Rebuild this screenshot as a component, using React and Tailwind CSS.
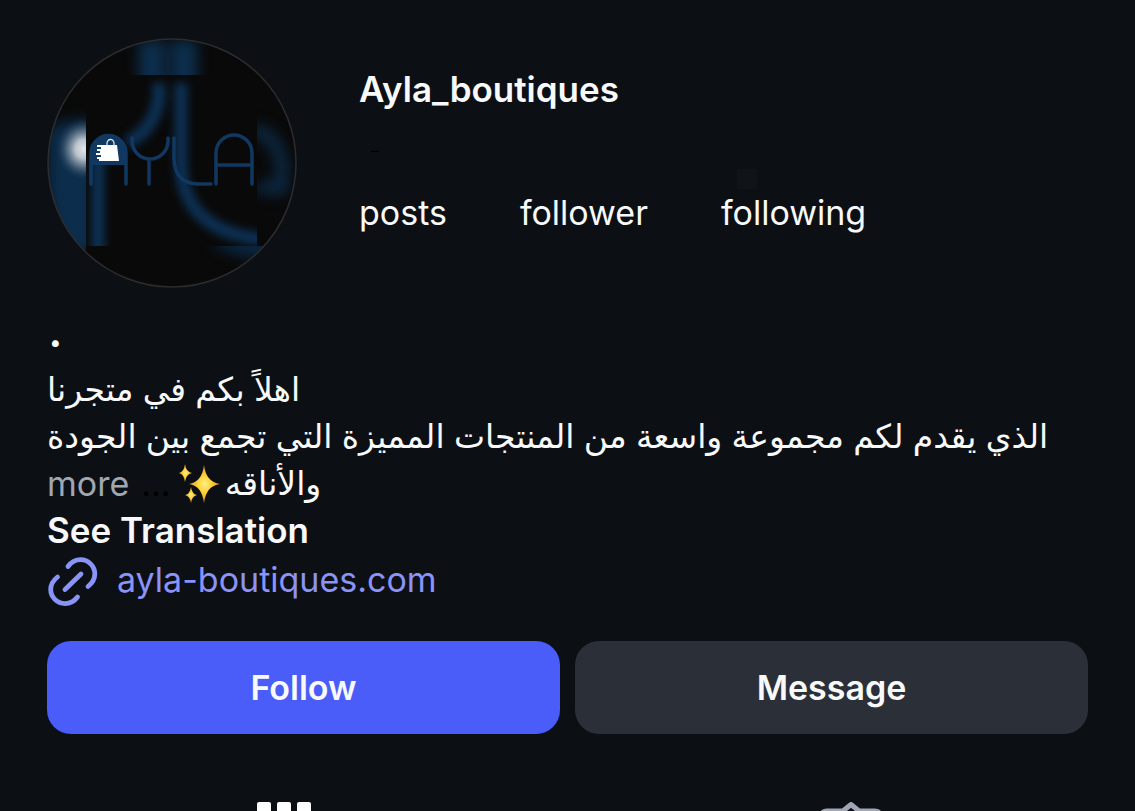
import React from "react";

const stats = [
  { label: "posts", masked: false },
  { label: "follower", masked: false },
  { label: "following", masked: true },
];

const Avatar = () => (
  <svg viewBox="0 0 250 250" className="w-[250px] h-[250px] shrink-0" role="img" aria-label="Ayla logo">
    <defs>
      <clipPath id="circle"><circle cx="125" cy="125" r="124" /></clipPath>
      <clipPath id="inner"><rect x="39" y="37" width="171" height="171" /></clipPath>
      <clipPath id="left"><rect x="0" y="37" width="39" height="190" /></clipPath>
      <clipPath id="top"><rect x="39" y="0" width="171" height="37" /></clipPath>
      <clipPath id="right"><rect x="210" y="37" width="40" height="171" /></clipPath>
      <clipPath id="bottom"><rect x="39" y="208" width="180" height="42" /></clipPath>
      <filter id="soft" x="-50%" y="-50%" width="200%" height="200%" colorInterpolationFilters="sRGB">
        <feGaussianBlur stdDeviation="4" />
      </filter>
      <filter id="softer" x="-100%" y="-100%" width="300%" height="300%" colorInterpolationFilters="sRGB">
        <feGaussianBlur stdDeviation="7" />
      </filter>
      <radialGradient id="glow">
        <stop offset="0" stopColor="#e2e6ea" />
        <stop offset="0.3" stopColor="#b9c2cb" />
        <stop offset="0.6" stopColor="#5d7489" stopOpacity="0.8" />
        <stop offset="1" stopColor="#0c2a47" stopOpacity="0" />
      </radialGradient>
    </defs>
    <g clipPath="url(#circle)">
      <rect width="250" height="250" fill="#090909" />
      <g clipPath="url(#left)">
        <path d="M0 92 Q15 80 50 82 V215 H20 Q0 190 0 150Z" fill="#0c2d4b" filter="url(#softer)" />
        <ellipse cx="37" cy="111" rx="29" ry="32" fill="url(#glow)" />
      </g>
      <g clipPath="url(#top)" fill="#0d2f4e" filter="url(#softer)">
        <rect x="92" y="2" width="26" height="48" />
        <rect x="124" y="2" width="26" height="48" />
      </g>
      <g clipPath="url(#right)">
        <path d="M205 92 Q230 95 235 128 V150 H210" fill="none" stroke="#0c2c49" strokeWidth="12" filter="url(#softer)" />
      </g>
      <g clipPath="url(#bottom)">
        <path d="M165 204 Q190 222 225 218 V200 H165Z" fill="#0b2947" filter="url(#softer)" />
      </g>
      <g clipPath="url(#inner)">
        <g fill="none" stroke="#0d3155" strokeWidth="13" filter="url(#soft)">
          <path d="M112 45 V60 Q107 92 80 105" />
          <path d="M134 45 V125 Q135 197 225 202" />
          <path d="M51 120 V225" />
        </g>
      </g>
      <path d="M44 127 V116 A17.5 17.5 0 0 1 79 116 V127Z" fill="#103860" />
      <g fill="none" stroke="#103860" strokeWidth="3.5" strokeLinecap="round">
        <path d="M44 146 V115 A17.5 17.5 0 0 1 79 115 V146" />
        <path d="M85 100 V103 A18 18 0 0 0 121 103 V100 M102 121 V146" />
        <path d="M127 100 V121 Q128 145 150 146 H164" />
        <path d="M169 146 V115 A17.5 17.5 0 0 1 205 115 V146 M169 127 H205" />
      </g>
      <path d="M54 107 H70 L72 123 H52 V121 H50 V119 H54 V117 H49 V115 H53 V113 H50 V111 H54 V109 H50 V107Z" fill="#fff" />
      <path d="M60 108 V106 A3.5 4 0 0 1 67 105 V108" fill="none" stroke="#dfe7ee" strokeWidth="1.3" />
    </g>
    <circle cx="125" cy="125" r="124" fill="none" stroke="#2c2c2d" strokeWidth="1.5" />
  </svg>
);

const Sparkles = () => (
  <svg viewBox="0 0 42 40" className="w-[42px] h-10 ml-2 mr-1" aria-hidden="true">
    <defs>
      <radialGradient id="gold">
        <stop offset="0" stopColor="#fff08a" />
        <stop offset="0.4" stopColor="#fdd43c" />
        <stop offset="1" stopColor="#e39a1e" />
      </radialGradient>
    </defs>
    <g fill="url(#gold)">
      <path d="M25 1 Q27 18 41 20 Q27 22 25 39 Q23 22 10 20 Q23 18 25 1Z" />
      <path d="M6 0 Q7 8 13 9 Q7 10 6 18 Q5 10 0 9 Q5 8 6 0Z" />
      <path d="M12 23 Q13 30 18 31 Q13 32 12 39 Q11 32 6 31 Q11 30 12 23Z" />
    </g>
  </svg>
);

const LinkIcon = () => (
  <svg viewBox="0 0 50 50" className="w-[50px] h-[50px] overflow-visible" fill="none" stroke="#8a93f8" strokeWidth="4.8" strokeLinecap="round" aria-hidden="true">
    <path d="M21 10.500 Q26 3.700 33.500 3.700 A14.300 14.300 0 0 1 47.800 18 Q47.800 25 41 30.500" />
    <path d="M30.500 41 Q25.500 47.600 18 47.600 A14.300 14.300 0 0 1 3.700 33.300 Q3.700 26.500 10.500 21" />
    <path d="M18 33.500 L34 18" />
  </svg>
);

const App = () => {
  return (
    <div className="h-screen overflow-hidden bg-[#0c1014] text-[#f8f9fa] text-[34px] leading-[47px] font-['Inter','Noto_Sans','DejaVu_Sans',sans-serif]">
      <main className="px-[47px] pt-[38px]">
        <header className="flex gap-[62px]">
          <Avatar />
          <div className="pt-7">
            <h1 className="font-semibold text-[35px]">Ayla_boutiques</h1>
            <div className="mt-[38px] ml-3 h-px w-2 bg-black" />
            <ul className="mt-[17px] flex gap-[73px]">
              {stats.map((stat) => (
                <li key={stat.label}>
                  <div className={stat.masked ? "ml-4 h-5 w-5 bg-[#101317]" : "h-5 w-5"} />
                  {stat.label}
                </li>
              ))}
            </ul>
          </div>
        </header>

        <section className="mt-[31px]">
          <p className="mb-4 pl-[2px] leading-[31px] font-black">.</p>
          <p lang="ar" dir="rtl" className="text-left text-[33px]">اهلاً بكم في متجرنا</p>
          <p lang="ar" dir="rtl" className="text-left text-[33px] whitespace-nowrap">
            الذي يقدم لكم مجموعة واسعة من المنتجات المميزة التي تجمع بين الجودة
          </p>
          <div className="flex items-center">
            <button type="button" className="text-[#a0a7b2]">more</button>
            <span className="ml-3 text-black">...</span>
            <Sparkles />
            <span lang="ar" dir="rtl" className="text-[33px]">والأناقه</span>
          </div>
          <button type="button" className="block font-semibold text-[35px]">See Translation</button>
          <a href="https://ayla-boutiques.com" className="mt-[2px] flex items-start gap-5 text-[#8a93f8]">
            <LinkIcon />
            ayla-boutiques.com
          </a>
        </section>

        <div className="mt-[35px] grid grid-cols-2 gap-[15px]">
          <button type="button" className="h-[93px] rounded-3xl bg-[#4a5df9] font-semibold">Follow</button>
          <button type="button" className="h-[93px] rounded-3xl bg-[#2b2f37] font-semibold">Message</button>
        </div>
      </main>

      <nav className="mt-[68px] grid grid-cols-2 items-start justify-items-center">
        <button type="button" aria-label="Posts">
          <svg viewBox="0 0 54 54" className="w-[54px] h-[54px]" fill="#fff">
            {[0, 20, 40].map((y) =>
              [0, 20, 40].map((x) => <rect key={`${x}-${y}`} x={x} y={y} width="14" height="14" rx="2" />)
            )}
          </svg>
        </button>
        <button type="button" aria-label="Tagged">
          <svg viewBox="0 0 64 64" className="w-16 h-16" fill="none" stroke="#a0a7b2" strokeWidth="5" strokeLinejoin="round">
            <path d="M8 9 H24 L32 2.500 L40 9 H56 Q61 9 61 14 V54 Q61 59 56 59 H8 Q3 59 3 54 V14 Q3 9 8 9Z" />
            <circle cx="32" cy="29" r="8" />
            <path d="M16 58 Q17 45 32 45 Q47 45 48 58" />
          </svg>
        </button>
      </nav>
    </div>
  );
};

export default App;
